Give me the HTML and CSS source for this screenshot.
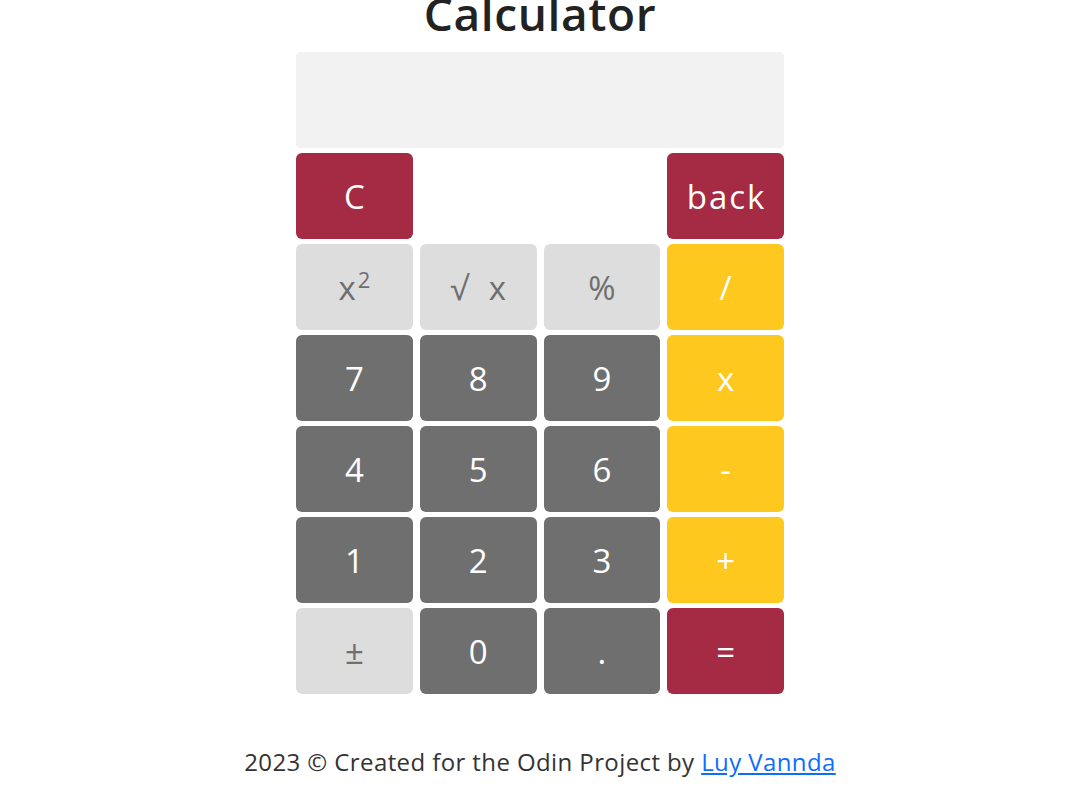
FILE: index.html
```html
<!DOCTYPE html>
<html lang="en">
<head>
<meta charset="utf-8">
<title>Calculator</title>
<link rel="stylesheet" href="styles.css">
</head>
<body>
<main class="page">
  <h1 class="title">Calculator</h1>
  <div class="calc">
    <div class="display"></div>
    <div class="keys">
      <button class="key red">C</button>
      <span class="blank"></span>
      <span class="blank"></span>
      <button class="key red">back</button>

      <button class="key light">x<sup>2</sup></button>
      <button class="key light wide">√ x</button>
      <button class="key light">%</button>
      <button class="key yellow">/</button>

      <button class="key dark">7</button>
      <button class="key dark">8</button>
      <button class="key dark">9</button>
      <button class="key yellow">x</button>

      <button class="key dark">4</button>
      <button class="key dark">5</button>
      <button class="key dark">6</button>
      <button class="key yellow">-</button>

      <button class="key dark">1</button>
      <button class="key dark">2</button>
      <button class="key dark">3</button>
      <button class="key yellow">+</button>

      <button class="key light">±</button>
      <button class="key dark">0</button>
      <button class="key dark">.</button>
      <button class="key red">=</button>
    </div>
  </div>
  <footer class="footer">2023 © Created for the Odin Project by <a href="#">Luy Vannda</a></footer>
</main>
</body>
</html>
```
FILE: styles.css
```css
* { box-sizing: border-box; }
html, body { margin: 0; padding: 0; background: #fff; }
body {
  font-family: "Open Sans", "Noto Sans", sans-serif;
  color: #212529;
  overflow: hidden;
}
.page {
  display: flex;
  flex-direction: column;
  align-items: center;
}
.title {
  margin: -14px 0 0;
  font-size: 46px;
  font-weight: 600;
  line-height: 1.2;
  letter-spacing: 0.6px;
  color: #222;
}
.calc {
  width: 488px;
  margin-top: 11px;
  display: flex;
  flex-direction: column;
  gap: 5px;
}
.display {
  height: 96px;
  background: #f2f2f2;
  border-radius: 4px;
}
.keys {
  display: grid;
  grid-template-columns: repeat(4, 1fr);
  grid-auto-rows: 86px;
  column-gap: 7px;
  row-gap: 5px;
}
.key {
  border: none;
  border-radius: 6px;
  font-family: "Open Sans", "Noto Sans", sans-serif;
  font-size: 33px;
  letter-spacing: 2px;
  padding: 0 0 0 2px;
  color: #fff;
  cursor: pointer;
}
.key.wide { word-spacing: 8px; }
.key sup { font-size: 22px; line-height: 0; }
.red { background: #a52a43; }
.dark { background: #706f6f; }
.light { background: #dddddd; color: #6f6f6f; }
.yellow { background: #fec81e; }
.footer {
  margin-top: 51px;
  font-size: 24px;
  letter-spacing: 0.4px;
  color: #333;
}
.footer a { color: #0d6efd; }
```
